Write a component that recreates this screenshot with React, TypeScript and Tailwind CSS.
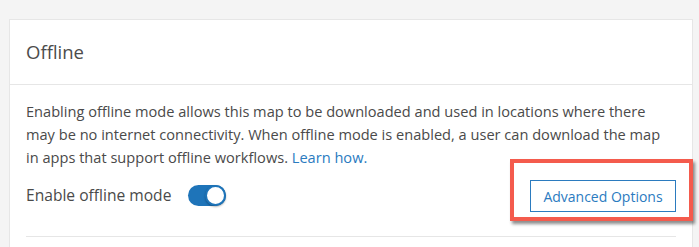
import React, { useState } from 'react';

const App: React.FC = () => {
  const [enabled, setEnabled] = useState(true);

  return (
    <div className="h-[247px] w-[699px] overflow-hidden bg-[#f4f4f4] pl-[9px] pr-[6px] pt-[19px] font-['Open_Sans',sans-serif] text-[#4a4a4a]">
      <div className="border border-[#e6e6e6] bg-white">
        <div className="flex h-[65px] items-center border-b border-[#e6e6e6] px-4">
          <h2 className="text-[18.5px] font-normal text-[#4c4c4c]">Offline</h2>
        </div>
        <div className="px-4 pt-[15px]">
          <p className="whitespace-nowrap text-[14.6px] leading-[23px]">
            Enabling offline mode allows this map to be downloaded and used in locations where there
            <br />
            may be no internet connectivity. When offline mode is enabled, a user can download the map
            <br />
            in apps that support offline workflows.{' '}
            <a href="#" className="text-[#2b7bbf]">Learn how.</a>
          </p>
          <div className="relative mt-[11px] flex items-center justify-between border-b border-[#e6e6e6] pb-[24px]">
            <label className="flex items-center gap-[17px] text-[15.6px]">
              <span>Enable offline mode</span>
              <button
                type="button"
                onClick={() => setEnabled(!enabled)}
                className={`relative h-[21px] w-[38px] rounded-full ${enabled ? 'bg-[#1e74b9]' : 'bg-[#d4d4d4]'}`}
              >
                <span
                  className={`absolute top-0 h-[21px] w-[21px] rounded-full border-2 border-[#1e74b9] bg-white shadow-[0_1px_2px_rgba(0,0,0,0.3)] ${enabled ? 'right-0' : 'left-0'}`}
                />
              </button>
            </label>
            <button className="h-[32px] w-[146px] border border-[#2b7bbf] bg-white text-[14px] text-[#2b7bbf]">
              Advanced Options
            </button>
            <div className="pointer-events-none absolute right-[-17px] top-[-21px] h-[62px] w-[183px] border-[4px] border-[#f45b4d] shadow-[2px_3px_3px_rgba(0,0,0,0.45)]" />
          </div>
          <div className="h-8" />
        </div>
      </div>
    </div>
  );
};

export default App;
